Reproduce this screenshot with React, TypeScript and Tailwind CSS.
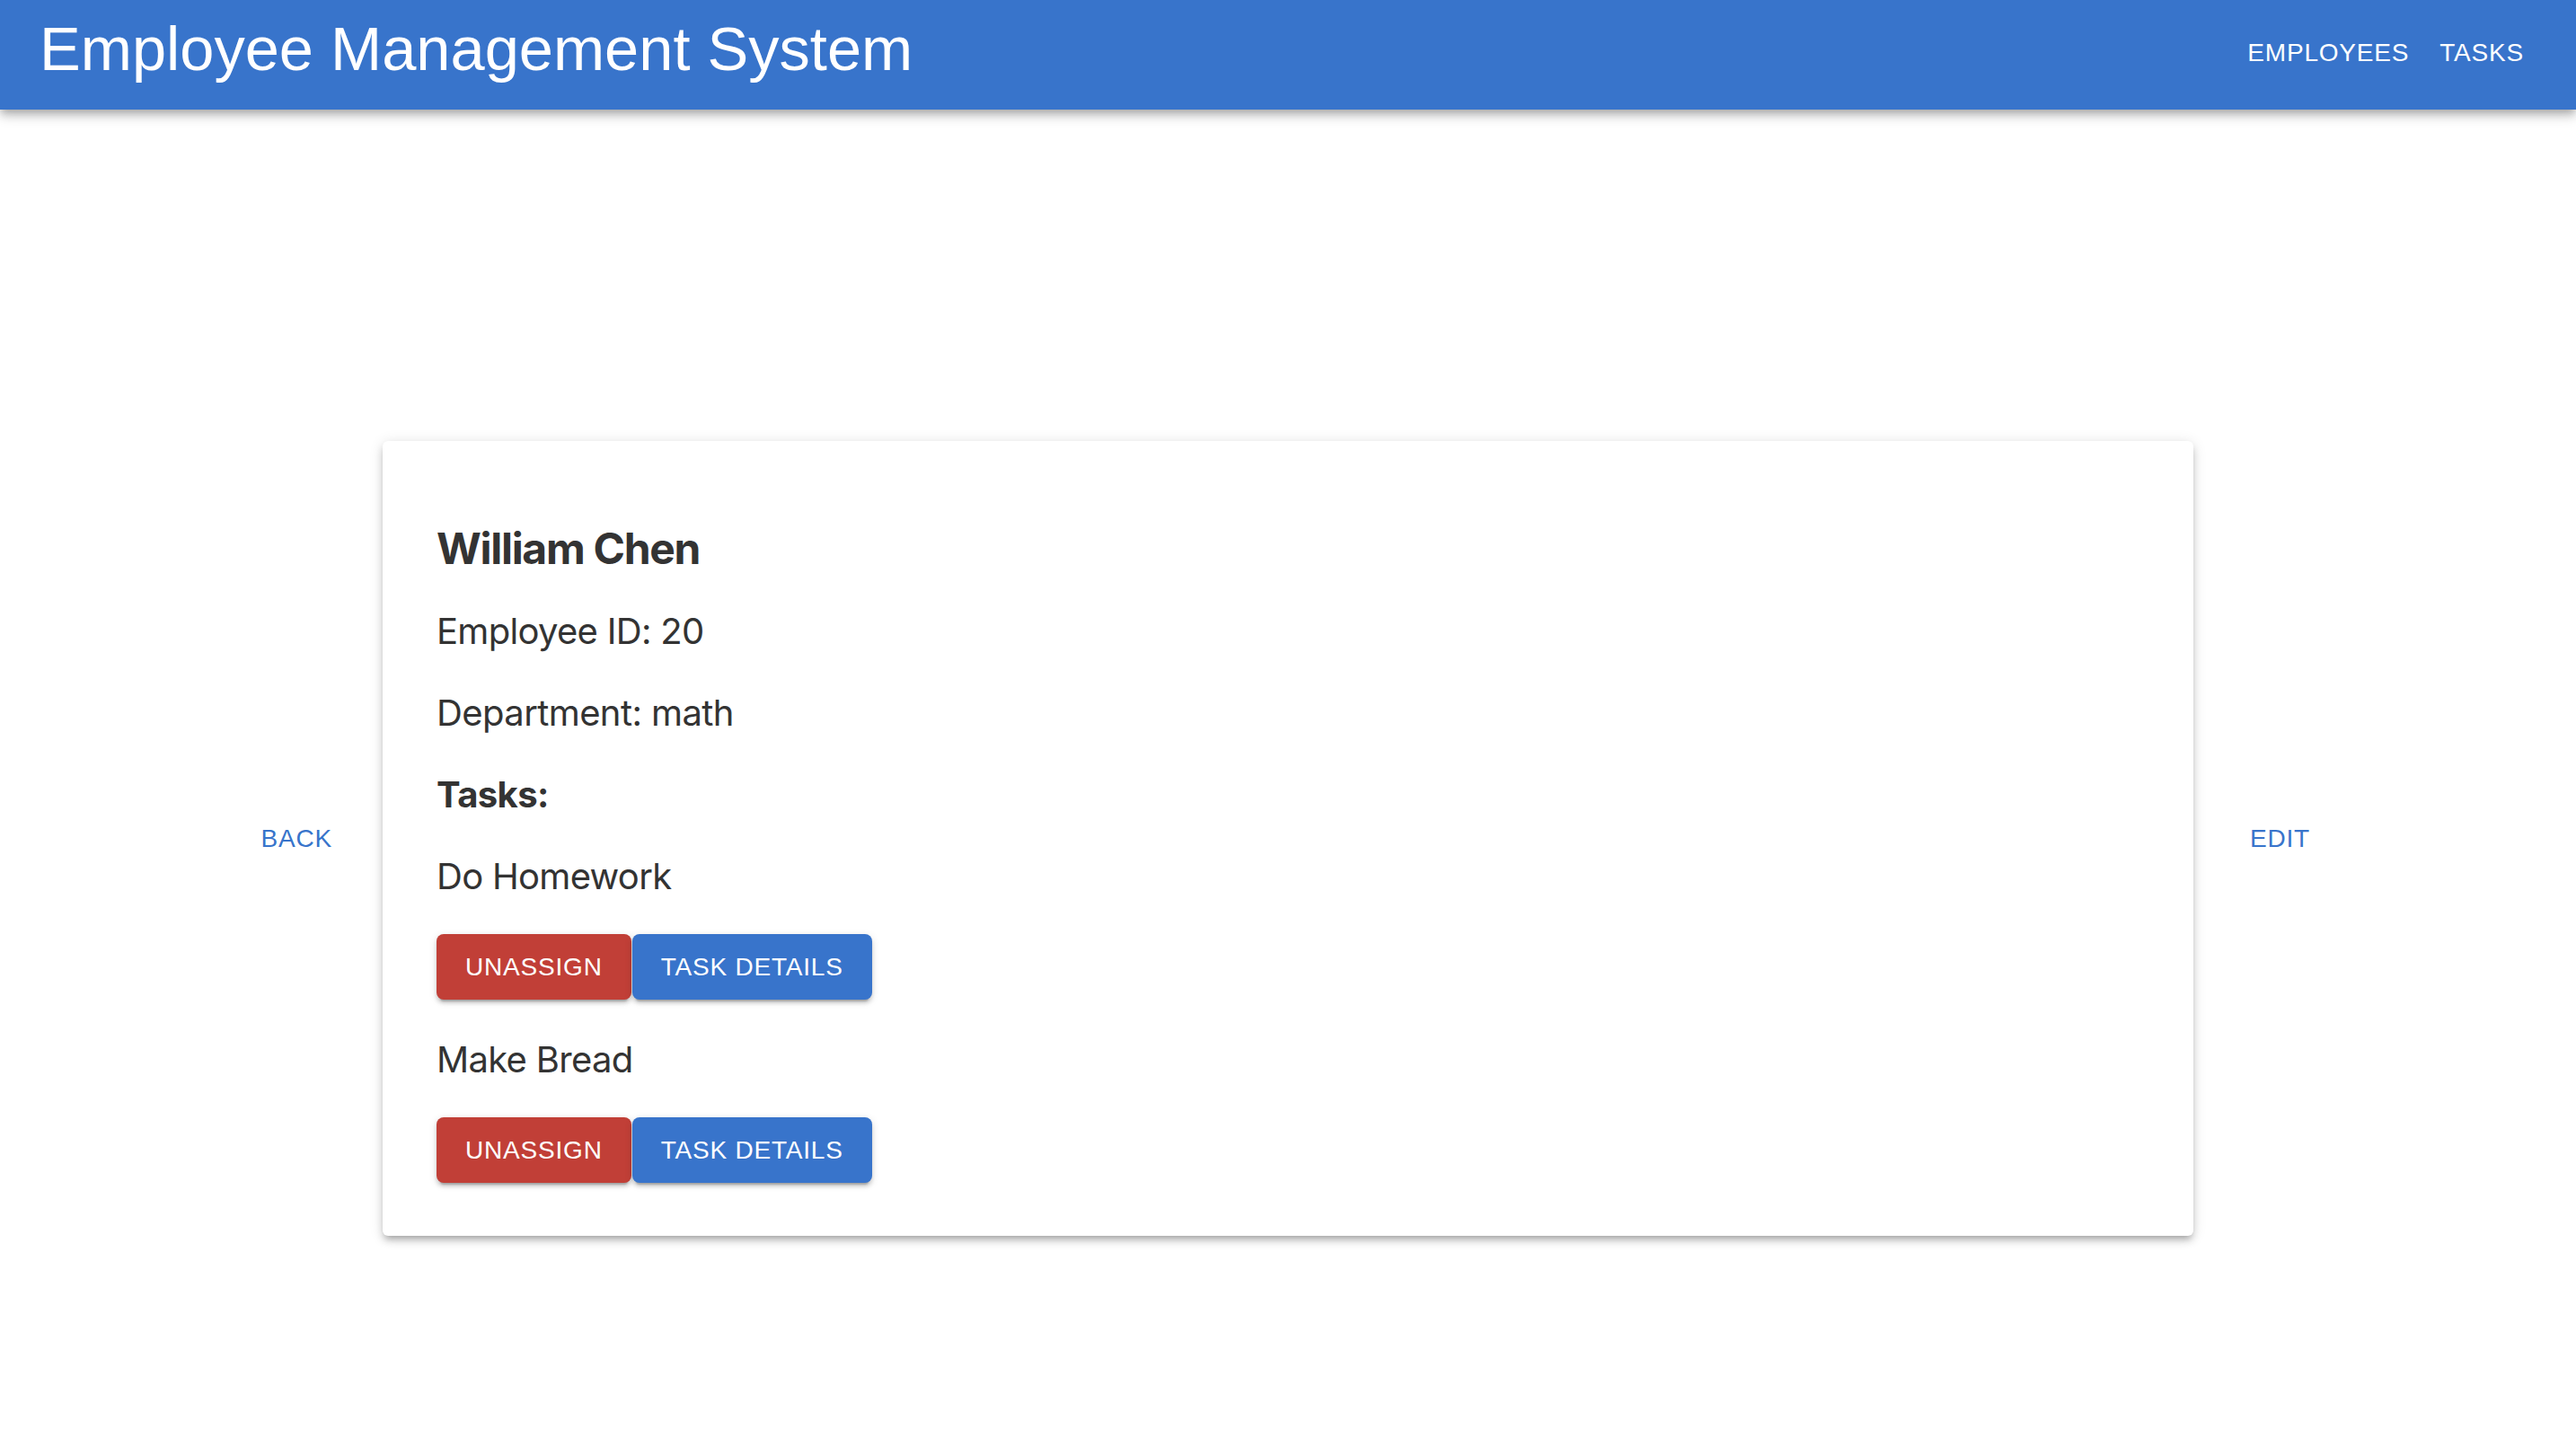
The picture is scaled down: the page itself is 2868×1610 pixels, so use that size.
import React from "react";

const sans = { fontFamily: '"Liberation Sans", Arial, Helvetica, sans-serif' };

function TaskBlock({ name }: { name: string }) {
  return (
    <div>
      <p className="text-[40px] leading-[48px] tracking-[-0.7px] text-[#333333] mt-[43px]">{name}</p>
      <div className="flex mt-[40px]">
        <button
          className="h-[73px] px-[32px] rounded-[8px] bg-[#c13f37] text-white text-[28px] leading-[49px] tracking-[0.8px] uppercase shadow-[0_6px_2px_-4px_rgba(0,0,0,0.2),0_4px_4px_0_rgba(0,0,0,0.14),0_2px_10px_0_rgba(0,0,0,0.12)]"
          style={sans}
        >
          Unassign
        </button>
        <button
          className="h-[73px] px-[32px] ml-[1px] rounded-[8px] bg-[#3874cb] text-white text-[28px] leading-[49px] tracking-[0.8px] uppercase shadow-[0_6px_2px_-4px_rgba(0,0,0,0.2),0_4px_4px_0_rgba(0,0,0,0.14),0_2px_10px_0_rgba(0,0,0,0.12)]"
          style={sans}
        >
          Task Details
        </button>
      </div>
    </div>
  );
}

export default function App() {
  return (
    <div className="min-h-screen bg-white" style={{ fontFamily: 'Inter, "Noto Sans", sans-serif' }}>
      <header className="h-[122px] bg-[#3874cb] flex items-center justify-between pl-[44px] pr-[42px] shadow-[0_4px_8px_-2px_rgba(0,0,0,0.2),0_8px_10px_0_rgba(0,0,0,0.14),0_2px_20px_0_rgba(0,0,0,0.12)] relative z-10">
        <h1 className="text-white text-[68.6px] leading-none font-normal pb-[11px]" style={sans}>
          Employee Management System
        </h1>
        <nav className="flex pb-[6px] gap-[2px]">
          <button className="px-[16px] text-white text-[28px] leading-[49px] tracking-[0.8px] uppercase" style={sans}>
            Employees
          </button>
          <button className="px-[16px] text-white text-[28px] leading-[49px] tracking-[0.8px] uppercase" style={sans}>
            Tasks
          </button>
        </nav>
      </header>

      <main className="grid grid-cols-[1fr_2016px_1fr] items-center pt-[369px]">
        <button
          className="justify-self-end mr-[56px] text-[#3874cb] text-[28px] leading-[49px] tracking-[0.8px] uppercase"
          style={sans}
        >
          Back
        </button>

        <div className="bg-white rounded-[6px] px-[60px] pt-[90px] pb-[59px] shadow-[0_6px_6px_-4px_rgba(0,0,0,0.2),0_6px_8px_0_rgba(0,0,0,0.14),0_2px_16px_0_rgba(0,0,0,0.12)]">
          <h2 className="text-[48px] leading-[60px] font-bold tracking-[-1.3px] text-[#333333]">William Chen</h2>
          <p className="text-[40px] leading-[48px] tracking-[-0.7px] text-[#333333] mt-[38px]">Employee ID: 20</p>
          <p className="text-[40px] leading-[48px] tracking-[-0.6px] text-[#333333] mt-[43px]">Department: math</p>
          <p className="text-[40px] leading-[48px] font-bold tracking-[-0.6px] text-[#333333] mt-[43px]">Tasks:</p>
          <TaskBlock name="Do Homework" />
          <TaskBlock name="Make Bread" />
        </div>

        <button
          className="justify-self-start ml-[63px] text-[#3874cb] text-[28px] leading-[49px] tracking-[0.8px] uppercase"
          style={sans}
        >
          Edit
        </button>
      </main>
    </div>
  );
}
